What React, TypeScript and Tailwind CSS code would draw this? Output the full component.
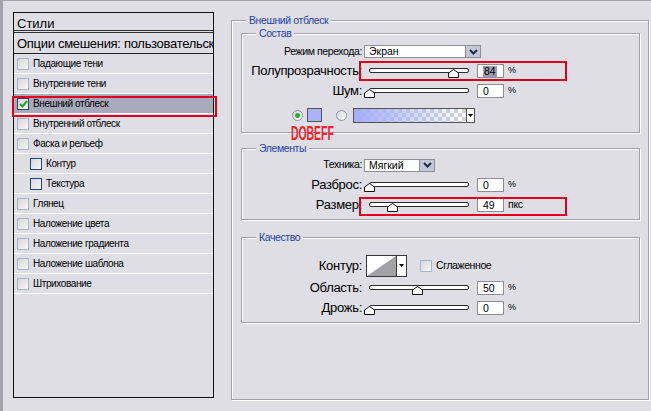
import React from 'react'

type Item = { label: string; checked?: boolean; active?: boolean; sub?: boolean; dark?: boolean }

const items: Item[] = [
  { label: 'Падающие тени' },
  { label: 'Внутренние тени' },
  { label: 'Внешний отблеск', checked: true, active: true, dark: true },
  { label: 'Внутренний отблеск' },
  { label: 'Фаска и рельеф' },
  { label: 'Контур', sub: true, dark: true },
  { label: 'Текстура', sub: true, dark: true },
  { label: 'Глянец' },
  { label: 'Наложение цвета' },
  { label: 'Наложение градиента' },
  { label: 'Наложение шаблона' },
  { label: 'Штрихование' },
]

function Check({ checked, dark }: { checked?: boolean; dark?: boolean }) {
  return (
    <span
      className={`flex items-center justify-center w-[12px] h-[12px] shrink-0 border bg-linear-to-br from-[#d6d6dc] to-[#f7f7f9] ${
        dark ? 'border-[#2a4873]' : 'border-[#a8b5cb]'
      }`}
    >
      {checked && (
        <svg width="9" height="8" viewBox="0 0 9 8">
          <path d="M1 4L3.5 6.5L8 1" stroke="#22a322" strokeWidth="2" fill="none" />
        </svg>
      )}
    </span>
  )
}

function Radio({ on }: { on?: boolean }) {
  return (
    <span className="flex items-center justify-center w-[11px] h-[11px] rounded-full border border-[#8a93a6] bg-linear-to-br from-[#d4d4da] to-white">
      {on && <span className="w-[5px] h-[5px] rounded-full bg-[#27b027]" />}
    </span>
  )
}

function Chevron() {
  return (
    <svg width="9" height="6" viewBox="0 0 9 6">
      <path d="M1 1L4.5 4.5L8 1" stroke="#1e2b4c" strokeWidth="2" fill="none" />
    </svg>
  )
}

function Tri() {
  return (
    <svg width="5" height="3" viewBox="0 0 5 3">
      <path d="M0 0H5L2.5 3Z" fill="#000" />
    </svg>
  )
}

function Slider({ value }: { value: number }) {
  return (
    <div className="relative w-[110px] h-[14px]">
      <div className="ml-[5px] mt-[4px] w-[100px] h-[5px] border border-[#2c2c2c] bg-white rounded-[2px]" />
      <svg
        className="absolute top-[5px]"
        style={{ left: value - 0.5 }}
        width="11"
        height="9"
        viewBox="0 0 11 9"
      >
        <path d="M0.5 8.5V4L5.5 0.5L10.5 4V8.5Z" fill="#fff" stroke="#111" />
      </svg>
    </div>
  )
}

function Num({ v, sel }: { v: string; sel?: boolean }) {
  return (
    <div className="ml-[3px] flex items-center w-[27px] h-[14px] bg-white border border-[#8d8d95] pl-[5px] text-[10.5px] leading-[11px]">
      <span className={sel ? 'bg-[#9b9db2] px-[1px]' : ''}>{v}</span>
    </div>
  )
}

function Label({ text, big }: { text: string; big?: boolean }) {
  return (
    <div
      className={`w-[120px] text-right whitespace-nowrap text-black ${
        big ? 'text-[13px] tracking-[-0.3px]' : 'text-[10.5px] tracking-[-0.4px]'
      }`}
    >
      {text}
    </div>
  )
}

function SliderRow({ label, value, num, unit, sel }: { label: string; value: number; num: string; unit: string; sel?: boolean }) {
  return (
    <div className="flex items-center h-[20px]">
      <Label text={label} big />
      <div className="ml-[2px] flex items-center">
        <Slider value={value} />
        <Num v={num} sel={sel} />
        <span className={unit === '%' ? 'ml-[4px] text-[9px]' : 'ml-[4px] text-[10.5px] tracking-[-0.3px]'}>{unit}</span>
      </div>
    </div>
  )
}

function Legend({ text, outer }: { text: string; outer?: boolean }) {
  return (
    <legend
      className={`px-[3px] bg-[#dedee4] text-[10.5px] leading-[12px] tracking-[-0.4px] text-[#1f43ab] ${
        outer ? 'ml-[5px]' : 'ml-[14px]'
      }`}
    >
      {text}
    </legend>
  )
}

export default function App() {
  return (
    <div className="relative w-[651px] h-[411px] overflow-hidden bg-[#dedee4] border-t border-l-[3px] border-[#a2a2aa] pl-[10px] pt-[11px] flex items-start [font-family:Liberation_Sans,Arial,sans-serif] text-black">
      {/* styles list */}
      <div className="w-[201px] h-[386px] border border-[#111] flex flex-col">
        <div className="h-[20px] pl-[3px] pt-[2px] text-[13px] leading-[18px] border-b-[3px] border-double border-[#333]">
          Стили
        </div>
        <div className="h-[21px] pl-[3px] pt-[2px] text-[13px] leading-[18px] tracking-[-0.3px] whitespace-nowrap overflow-hidden border-b border-[#222]">
          Опции смешения: пользовательск
        </div>
        {items.map(it => (
          <div
            key={it.label}
            className={`flex items-center gap-[4px] h-[20px] border-b border-white text-[10px] tracking-[-0.4px] whitespace-nowrap ${
              it.sub ? 'pl-[16px]' : 'pl-[3px]'
            } ${it.active ? 'bg-[#a8aabb]' : ''}`}
          >
            <Check checked={it.checked} dark={it.dark} />
            <span>{it.label}</span>
          </div>
        ))}
      </div>

      {/* settings */}
      <fieldset className="ml-[17px] mt-[2px] w-[418px] h-[386px] border border-[#a0a0a8] shadow-[inset_1px_1px_0_#fff,1px_1px_0_#fff] pl-[9px] pr-[8px]">
        <Legend text="Внешний отблеск" outer />

        <fieldset className="mt-[1px] border border-[#a0a0a8] shadow-[inset_1px_1px_0_#fff,1px_1px_0_#fff] pb-[3px]">
          <Legend text="Состав" />
          <div className="mt-[3px] flex items-center h-[19px]">
            <Label text="Режим перехода:" />
            <div className="ml-[2px] flex w-[117px] h-[13px] bg-white border border-[#8f8f98]">
              <div className="flex-1 pl-[4px] text-[10.5px] leading-[11px]">Экран</div>
              <div className="w-[15px] bg-[#c4c7d7] border-l border-[#8f8f98] flex items-center justify-center">
                <Chevron />
              </div>
            </div>
          </div>
          <SliderRow label="Полупрозрачность:" value={84} num="84" unit="%" sel />
          <SliderRow label="Шум:" value={0} num="0" unit="%" />
          <div className="flex items-center h-[28px]">
            <div className="ml-[50px]">
              <Radio on />
            </div>
            <div className="ml-[4px] w-[15px] h-[14px] bg-[#a9b2fb] border border-[#555]" />
            <div className="ml-[14px]">
              <Radio />
            </div>
            <div className="ml-[6px] flex w-[122px] h-[15px] border border-[#555] bg-white">
              <div className="flex-1 bg-[conic-gradient(#d2d2d6_25%,#ffffff_0_50%,#d2d2d6_0_75%,#ffffff_0)] bg-[length:8px_8px]">
                <div className="h-full bg-linear-to-r from-[#a3adfa] to-transparent" />
              </div>
              <div className="w-[8px] border-l border-[#555] bg-white flex items-center justify-center">
                <Tri />
              </div>
            </div>
          </div>
        </fieldset>

        <fieldset className="mt-[9px] border border-[#a0a0a8] shadow-[inset_1px_1px_0_#fff,1px_1px_0_#fff] pb-[4px]">
          <Legend text="Элементы" />
          <div className="mt-[1px] flex items-center h-[20px]">
            <Label text="Техника:" />
            <div className="ml-[2px] flex w-[71px] h-[13px] bg-white border border-[#8f8f98]">
              <div className="flex-1 pl-[4px] text-[10.5px] leading-[11px]">Мягкий</div>
              <div className="w-[15px] bg-[#c4c7d7] border-l border-[#8f8f98] flex items-center justify-center">
                <Chevron />
              </div>
            </div>
          </div>
          <SliderRow label="Разброс:" value={0} num="0" unit="%" />
          <SliderRow label="Размер:" value={23} num="49" unit="пкс" />
        </fieldset>

        <fieldset className="mt-[11px] border border-[#a0a0a8] shadow-[inset_1px_1px_0_#fff,1px_1px_0_#fff] pb-[4px]">
          <Legend text="Качество" />
          <div className="mt-[10px] flex items-center h-[25px]">
            <Label text="Контур:" big />
            <div className="ml-[4px] flex w-[41px] h-[22px] border border-[#3a3a3a] bg-white">
              <svg width="29" height="20" viewBox="0 0 29 20">
                <polygon points="0,20 29,0 29,20" fill="#a2a2a6" />
              </svg>
              <div className="flex-1 border-l border-[#3a3a3a] flex items-center justify-center">
                <Tri />
              </div>
            </div>
            <div className="ml-[13px]">
              <Check />
            </div>
            <span className="ml-[4px] text-[10.5px] tracking-[-0.4px]">Сглаженное</span>
          </div>
          <SliderRow label="Область:" value={48} num="50" unit="%" />
          <SliderRow label="Дрожь:" value={0} num="0" unit="%" />
        </fieldset>
      </fieldset>

      {/* annotations */}
      <div className="absolute left-[9px] top-[95px] w-[205px] h-[21px] border-2 border-[#e0001b]" />
      <div className="absolute left-[356px] top-[60px] w-[208px] h-[20px] border-2 border-[#e0001b]" />
      <div className="absolute left-[356px] top-[196px] w-[208px] h-[19px] border-2 border-[#e0001b]" />
      <div className="absolute left-[288px] top-[125px] text-[20px] leading-[14px] font-bold text-[#e8262e] scale-x-[0.52] origin-left">
        DOBEFF
      </div>
    </div>
  )
}
